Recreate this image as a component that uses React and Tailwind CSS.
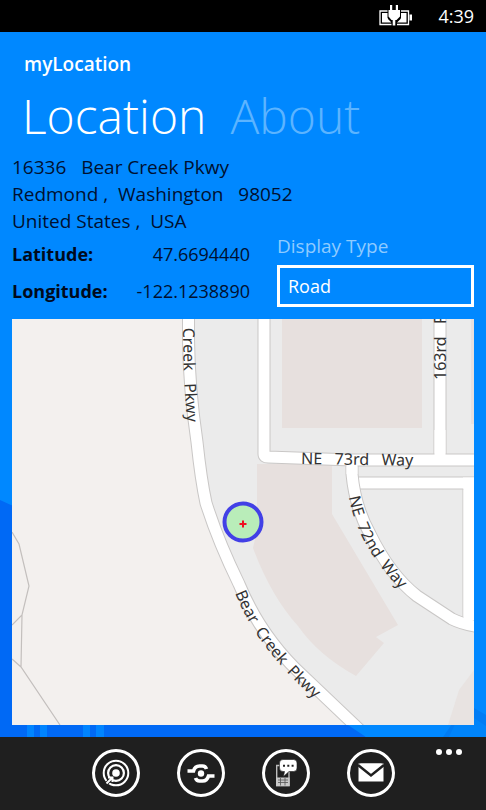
import React from "react";

function BatteryIcon() {
  return (
    <svg width="35" height="22" viewBox="0 0 35 22" aria-label="Charging" role="img">
      <path d="M1 6h28.500v13.500H1z" fill="none" stroke="#fff" strokeWidth="1.300" />
      <path d="M30.500 9.500h2.500v6H30.500z" fill="#fff" />
      <path d="M3 8h6v6l3.500 3.500H3zM27.500 8h-6v6l-3.500 3.500H27.500z" fill="#fff" />
      <path d="M8.500 4.500h13.500V13L18 16.500V21h-5.500V16.500L8.500 13z" fill="#000" />
      <path
        d="M11 0h2.200v5h3.600V0H19v5h2v6.500L17.500 15H16.300v5.500h-2.600V15H12.500L9.500 11.500V5H11z"
        fill="#fff"
      />
    </svg>
  );
}

function Wallpaper() {
  return (
    <svg
      className="absolute inset-x-0 bottom-0 h-[237px] w-full"
      viewBox="0 500 486 237"
      preserveAspectRatio="none"
      aria-hidden="true"
    >
      <path d="M0 500C100 545 220 600 366 737H0z" fill="#0069f5" />
      <path d="M366 737L348 725H474V737z" fill="#0088ff" />
      <path d="M27 720h7v17h-7zM40 720h7v17h-7zM83 720h7v17h-7zM96 720h8v17h-8z" fill="#0084ff" />
      <path d="M474 708L486 715V737H443L452 724H474z" fill="#007cf4" />
      <path d="M455 724H474V718L486 726V737H449z" fill="#0084fa" />
    </svg>
  );
}

function Road({ d, width = 12 }) {
  return (
    <>
      <path d={d} fill="none" stroke="#c9c7c6" strokeWidth={width + 2} strokeLinejoin="round" />
      <path d={d} fill="none" stroke="#fff" strokeWidth={width} strokeLinejoin="round" />
    </>
  );
}

const roads = {
  bear: "M188.500 310V340C189 378 193 415 197 442Q201 480 206 503Q218 541 239 584Q261 637 302 675L364 734",
  seventyThird: "M264 310V454Q264 457 268 457L352 460H486",
  oneSixtyThird: "M440 310V460",
  link: "M355 483H486",
  seventySecond: "M352 461V474Q355 507 370 534Q390 575 417 596L452 619Q464 625 486 628",
};

function LocationMap() {
  return (
    <svg
      className="block h-full min-h-[406px] w-full"
      viewBox="12 319 462 406"
      preserveAspectRatio="xMidYMid slice"
      role="img"
      aria-label="Map of the current location"
    >
      <defs>
        <path id="creek-label" d="M183 328Q183 380 189 450" />
        <path id="bear-label" d="M235 593Q257 649 317 701L345 724" />
        <path id="seventy-third-label" d="M301 464L430 466" />
        <path id="seventy-second-label" d="M349 497Q357 544 399 588L425 612" />
        <path id="one-sixty-third-label" d="M446 380V300" />
      </defs>
      <rect x="12" y="319" width="462" height="406" fill="#ebebeb" />
      <path
        d="M12 319H188V340C188 378 192 415 197 442Q201 480 206 503Q218 541 239 584Q261 637 302 675L355 725H12z"
        fill="#f3f0ee"
      />
      <path d="M282 319H422V428H282zM471 319H474V424H471z" fill="#e7e0de" />
      <path
        d="M257 464H332V514L398 625L376 637L384 643L356 676Q318 655 298 626Q271 596 253 548L257 530z"
        fill="#e7e0de"
      />
      <path d="M474 670L459 690L448 725H474z" fill="#e8e3e1" />
      <g fill="none" stroke="#c3bfbd" strokeWidth="1.200">
        <path d="M12 532L19 544L29 586L22 615L12 625M22 615L21 667M12 659L21 667L60 725" />
      </g>
      <Road d="M469 483V626" width={11} />
      <Road d={roads.link} width={11} />
      <Road d={roads.oneSixtyThird} width={11} />
      <Road d={roads.seventySecond} width={11} />
      <Road d={roads.seventyThird} width={11} />
      <Road d={roads.bear} width={11} />
      <path
        d="M440 430V460M352 455V474M463 483H486M469 478V620"
        fill="none"
        stroke="#fff"
        strokeWidth="11"
      />
      <g className="font-['Noto_Sans','Open_Sans',sans-serif] text-[16px]" fill="#333">
        <text>
          <textPath href="#creek-label">{"Creek\u00a0\u00a0\u00a0Pkwy"}</textPath>
        </text>
        <text>
          <textPath href="#bear-label">{"Bear\u00a0\u00a0Creek\u00a0\u00a0Pkwy"}</textPath>
        </text>
        <text>
          <textPath href="#seventy-third-label">{"NE\u00a0\u00a0\u00a073rd\u00a0\u00a0\u00a0Way"}</textPath>
        </text>
        <text>
          <textPath href="#seventy-second-label">{"NE\u00a0\u00a072nd\u00a0\u00a0Way"}</textPath>
        </text>
        <text>
          <textPath href="#one-sixty-third-label">{"163rd\u00a0\u00a0\u00a0P"}</textPath>
        </text>
      </g>
      <circle cx="243" cy="522" r="18.500" fill="#b9edb9" stroke="#4240e6" strokeWidth="4" />
      <path d="M243 520.500v7M239.500 524h7" stroke="#f01020" strokeWidth="2" />
    </svg>
  );
}

function TargetIcon() {
  return (
    <svg width="30" height="30" viewBox="0 0 30 30" fill="none" stroke="#fff" aria-hidden="true">
      <circle cx="15" cy="15" r="12.300" strokeWidth="2" />
      <circle cx="15" cy="15" r="7.900" strokeWidth="2.200" />
      <circle cx="15" cy="15" r="3.800" fill="#fff" stroke="none" />
      <path d="M5 26L12 19" stroke="#1f1f1f" strokeWidth="3.500" />
      <path d="M5.500 25.500L11 20M7 19.500h4.500V24" strokeWidth="2" />
    </svg>
  );
}

function ShareIcon() {
  return (
    <svg width="30" height="30" viewBox="0 0 30 30" fill="none" stroke="#fff" aria-hidden="true">
      <circle cx="15" cy="15.500" r="3.200" fill="#fff" stroke="none" />
      <path d="M1.500 13H7.500C8.500 9.500 10.500 8 13.500 8H16.500Q19.500 8 20.500 11" strokeWidth="3.600" />
      <path d="M28.500 18H22.500C21.500 21.500 19.500 23 16.500 23H13.500Q10.500 23 9.500 20" strokeWidth="3.600" />
    </svg>
  );
}

function MessageIcon() {
  return (
    <svg width="30" height="30" viewBox="0 0 30 30" aria-hidden="true">
      <path d="M5.700 7.500H18V27.500H5.700z" fill="none" stroke="#bdbdbd" strokeWidth="1.400" />
      <path d="M5 19.500H18.700V28.200H5z" fill="#c8c8c8" />
      <path d="M7 22H17M7 24.500H17M9.500 20V27.500M14 20V27.500" stroke="#555" strokeWidth="0.800" />
      <path
        d="M12 1.500H22.500Q26 1.500 26 5V10Q26 13.500 22.500 13.500H18L12.500 18.500L13.500 13.500H12Q8.500 13.500 8.500 10V5Q8.500 1.500 12 1.500z"
        fill="#fff"
        stroke="#1f1f1f"
        strokeWidth="0.600"
      />
      <path d="M12 6.800h2v2h-2zM16.300 6.800h2v2h-2zM20.600 6.800h2v2h-2z" fill="#222" />
    </svg>
  );
}

function MailIcon() {
  return (
    <svg width="30" height="30" viewBox="0 0 30 30" aria-hidden="true">
      <path d="M2.500 5.500H27.500V23.500H2.500z" fill="#fff" />
      <path d="M2 7L15 17.500L28 7" fill="none" stroke="#1f1f1f" strokeWidth="2.500" />
      <path d="M4 5.500H26L15 14.500z" fill="#fff" />
    </svg>
  );
}

const actions = [
  { label: "Find me", Icon: TargetIcon },
  { label: "Share", Icon: ShareIcon },
  { label: "Send message", Icon: MessageIcon },
  { label: "Send mail", Icon: MailIcon },
];

export default function App() {
  return (
    <div className="flex min-h-screen flex-col bg-[#0088ff] font-['Open_Sans','Noto_Sans',sans-serif] text-[#001030]">
      <header className="flex h-8 items-center justify-end gap-6 bg-black pr-3 text-white">
        <BatteryIcon />
        <time className="text-lg">4:39</time>
      </header>

      <main className="relative flex flex-1 flex-col px-3 pb-3">
        <Wallpaper />
        <div className="relative flex flex-1 flex-col">
          <h1 className="px-3 pt-5 text-[19px] leading-6 font-semibold text-white">myLocation</h1>
          <nav className="mt-3 flex gap-6 px-2.5 text-5xl leading-[56px] font-light">
            <button type="button" className="text-white">Location</button>
            <button type="button" className="text-[#5cb4ff]">About</button>
          </nav>

          <address className="mt-2.5 text-[19px] leading-[27px] whitespace-pre not-italic">
            <p>{"16336   Bear Creek Pkwy"}</p>
            <p>{"Redmond ,  Washington   98052"}</p>
            <p>{"United States ,  USA"}</p>
          </address>

          <section className="flex gap-[27px]">
            <dl className="grid w-[238px] shrink-0 grid-cols-[auto_1fr] grid-rows-[37px_37px] items-center text-lg">
              <dt className="font-bold text-[#000a1c]">Latitude:</dt>
              <dd className="text-right">47.6694440</dd>
              <dt className="font-bold text-[#000a1c]">Longitude:</dt>
              <dd className="text-right">-122.1238890</dd>
            </dl>
            <div className="flex min-w-0 flex-1 flex-col gap-2">
              <label htmlFor="display-type" className="text-[19px] leading-[22px] text-[#8fcbff]">
                Display Type
              </label>
              <select
                id="display-type"
                defaultValue="Road"
                className="h-[42px] appearance-none rounded-none border-3 border-white bg-transparent px-2 text-lg text-white"
              >
                <option>Road</option>
              </select>
            </div>
          </section>

          <div className="mt-2.5 flex-1">
            <LocationMap />
          </div>
        </div>
      </main>

      <footer className="relative flex h-[73px] justify-center bg-[#1f1f1f] pt-3">
        <div className="flex gap-[37px]">
          {actions.map(({ label, Icon }) => (
            <button
              key={label}
              type="button"
              aria-label={label}
              className="flex size-12 items-center justify-center rounded-full border-3 border-white"
            >
              <Icon />
            </button>
          ))}
        </div>
        <button type="button" aria-label="More" className="absolute top-3 right-6 flex gap-1">
          <span className="size-1.5 rounded-full bg-white" />
          <span className="size-1.5 rounded-full bg-white" />
          <span className="size-1.5 rounded-full bg-white" />
        </button>
      </footer>
    </div>
  );
}
